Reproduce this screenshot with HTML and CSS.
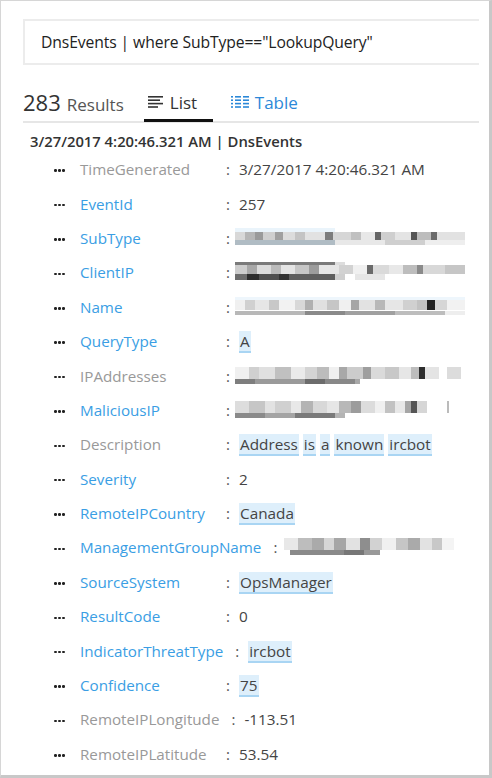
FILE: index.html
```html
<!DOCTYPE html>
<html>
<head>
<meta charset="utf-8">
<link rel="stylesheet" href="styles.css">
</head>
<body>
<div class="frame">
  <div class="query">DnsEvents | where SubType=="LookupQuery"</div>
  <div class="tabs">
    <div class="count"><span class="num">283</span> <span class="res">Results</span></div>
    <div class="tab active">
      <svg class="ico" width="16" height="12" viewBox="0 0 16 12"><rect x="0" y="0" width="15" height="1.6" fill="#333"/><rect x="0" y="3.4" width="12" height="1.6" fill="#333"/><rect x="0" y="6.8" width="15" height="1.6" fill="#333"/><rect x="0" y="10.2" width="10" height="1.6" fill="#333"/></svg>
      <span>List</span>
    </div>
    <div class="tab blue">
      <svg class="ico" width="18" height="12" viewBox="0 0 18 12"><g fill="#2b88d8"><rect x="0" y="0" width="2" height="1.6"/><rect x="4" y="0" width="6" height="1.6"/><rect x="12" y="0" width="6" height="1.6"/><rect x="0" y="3.4" width="2" height="1.6"/><rect x="4" y="3.4" width="6" height="1.6"/><rect x="12" y="3.4" width="6" height="1.6"/><rect x="0" y="6.8" width="2" height="1.6"/><rect x="4" y="6.8" width="6" height="1.6"/><rect x="12" y="6.8" width="6" height="1.6"/><rect x="0" y="10.2" width="2" height="1.6"/><rect x="4" y="10.2" width="6" height="1.6"/><rect x="12" y="10.2" width="6" height="1.6"/></g></svg>
      <span>Table</span>
    </div>
  </div>
  <div class="head">3/27/2017 4:20:46.321 AM | DnsEvents</div>
  <div class="rows">
    <div class="row"><span class="dots"><i></i><i></i><i></i></span><span class="lbl gray">TimeGenerated</span><span class="colon">:</span><span class="val">3/27/2017 4:20:46.321 AM</span></div>
    <div class="row"><span class="dots"><i></i><i></i><i></i></span><span class="lbl">EventId</span><span class="colon">:</span><span class="val">257</span></div>
    <div class="row"><span class="dots"><i></i><i></i><i></i></span><span class="lbl">SubType</span><span class="colon">:</span><span class="blur b1"></span></div>
    <div class="row"><span class="dots"><i></i><i></i><i></i></span><span class="lbl">ClientIP</span><span class="colon">:</span><span class="blur b2"></span></div>
    <div class="row"><span class="dots"><i></i><i></i><i></i></span><span class="lbl">Name</span><span class="colon">:</span><span class="blur b3"></span></div>
    <div class="row"><span class="dots"><i></i><i></i><i></i></span><span class="lbl">QueryType</span><span class="colon">:</span><span class="val"><span class="hl">A</span></span></div>
    <div class="row"><span class="dots"><i></i><i></i><i></i></span><span class="lbl gray">IPAddresses</span><span class="colon">:</span><span class="blur b4"></span></div>
    <div class="row"><span class="dots"><i></i><i></i><i></i></span><span class="lbl">MaliciousIP</span><span class="colon">:</span><span class="blur b5"></span></div>
    <div class="row"><span class="dots"><i></i><i></i><i></i></span><span class="lbl gray">Description</span><span class="colon">:</span><span class="val"><span class="hl">Address</span> <span class="hl">is</span> <span class="hl">a</span> <span class="hl">known</span> <span class="hl">ircbot</span></span></div>
    <div class="row"><span class="dots"><i></i><i></i><i></i></span><span class="lbl">Severity</span><span class="colon">:</span><span class="val">2</span></div>
    <div class="row"><span class="dots"><i></i><i></i><i></i></span><span class="lbl">RemoteIPCountry</span><span class="colon">:</span><span class="val"><span class="hl">Canada</span></span></div>
    <div class="row"><span class="dots"><i></i><i></i><i></i></span><span class="lbl">ManagementGroupName</span><span class="colon">:</span><span class="blur b6"></span></div>
    <div class="row"><span class="dots"><i></i><i></i><i></i></span><span class="lbl">SourceSystem</span><span class="colon">:</span><span class="val"><span class="hl">OpsManager</span></span></div>
    <div class="row"><span class="dots"><i></i><i></i><i></i></span><span class="lbl">ResultCode</span><span class="colon">:</span><span class="val">0</span></div>
    <div class="row"><span class="dots"><i></i><i></i><i></i></span><span class="lbl">IndicatorThreatType</span><span class="colon">:</span><span class="val"><span class="hl">ircbot</span></span></div>
    <div class="row"><span class="dots"><i></i><i></i><i></i></span><span class="lbl">Confidence</span><span class="colon">:</span><span class="val"><span class="hl">75</span></span></div>
    <div class="row"><span class="dots"><i></i><i></i><i></i></span><span class="lbl gray">RemoteIPLongitude</span><span class="colon">:</span><span class="val">-113.51</span></div>
    <div class="row"><span class="dots"><i></i><i></i><i></i></span><span class="lbl gray">RemoteIPLatitude</span><span class="colon">:</span><span class="val">53.54</span></div>
  </div>
</div>
</body>
</html>
```

FILE: styles.css
```css
html, body {
  margin: 0;
  padding: 0;
  background: #fff;
}
body {
  font-family: "Open Sans", "Noto Sans", sans-serif;
  color: #444;
}
.frame {
  box-sizing: border-box;
  width: 492px;
  height: 778px;
  border-top: 1px solid #d6d6d6;
  border-left: 1px solid #d6d6d6;
  border-right: 3px solid #c8c8c8;
  border-bottom: 3px solid #c8c8c8;
  padding: 18px 10px 0 22px;
  overflow: hidden;
}
.query {
  box-sizing: border-box;
  height: 46px;
  border: 2px solid #ececec;
  border-right: none;
  padding-left: 16px;
  display: flex;
  align-items: center;
  font-size: 15.7px;
  color: #222;
  letter-spacing: -0.1px;
}
.tabs {
  margin-top: 18px;
  height: 38px;
  border-bottom: 2px solid #e6e6e6;
  display: flex;
  align-items: center;
  position: relative;
}
.count {
  display: flex;
  align-items: baseline;
  margin-right: 20px;
}
.num {
  font-size: 22px;
  color: #333;
  margin-right: 6px;
}
.res {
  font-size: 17px;
  color: #555;
}
.tab {
  display: flex;
  align-items: center;
  height: 100%;
  padding: 0 12px 0 4px;
  font-size: 17px;
  color: #333;
  box-sizing: border-box;
}
.tab .ico {
  margin-right: 6px;
}
.tab.active {
  border-bottom: 3px solid #111;
  margin-bottom: -2px;
  padding-top: 1px;
  width: 69px;
}
.tab.blue {
  color: #2b88d8;
  margin-left: 14px;
}
.head {
  margin: 6px 0 0 7px;
  font-size: 14.8px;
  font-weight: 600;
  color: #333;
  height: 23px;
  line-height: 24px;
}
.rows {
  margin-left: 30px;
}
.row {
  height: 34.4px;
  display: flex;
  align-items: center;
  font-size: 15px;
  white-space: nowrap;
}
.dots {
  width: 27px;
  display: flex;
  gap: 1.5px;
  padding-left: 1px;
  padding-top: 3px;
  box-sizing: border-box;
}
.dots i {
  display: block;
  width: 2.5px;
  height: 2.5px;
  border-radius: 50%;
  background: #222;
}
.lbl {
  min-width: 134px;
  color: #3a9ee4;
  font-size: 15.2px;
}
.lbl.gray {
  color: #999;
}
.colon {
  margin-left: 12px;
  width: 13px;
  color: #555;
}
.val {
  color: #444;
  font-size: 15.3px;
}
.hl {
  background: #deeffb;
  border-bottom: 2px solid #a9d5f3;
  padding: 0 1px;
}
.blur {
  display: block;
  width: 230px;
  height: 20px;
  margin-left: -4px;
  background-repeat: no-repeat;
}
.b1 {
  background-image:
    linear-gradient(90deg, #eaf4fb 0 100px, #fff 100px),
    linear-gradient(90deg, #d8d8d8 0 10px, #b6b6b6 10px 20px, #9a9a9a 20px 28px, #cfcfcf 28px 40px, #a0a0a0 40px 48px, #dcdcdc 48px 60px, #c4c4c4 60px 70px, #e2e2e2 70px 90px, #7d7d7d 90px 98px, #d6d6d6 98px 116px, #c0c0c0 116px 126px, #e8e8e8 126px 140px, #666 140px 146px, #cfcfcf 146px 160px, #e4e4e4 160px 176px, #555 176px 182px, #bdbdbd 182px 196px, #6b6b6b 196px 202px, #e2e2e2 202px 230px),
    linear-gradient(90deg, #b0bcc4 0 100px, #e8e8e8 100px 150px, #cfcfcf 150px 190px, #eee 190px);
  background-size: 230px 4px, 230px 8px, 230px 5px;
  background-position: 0 0, 0 4px, 0 12px;
}
.b2 {
  background-image:
    linear-gradient(90deg, #7a7a7a 0 100px, #ddd 100px 110px, #fff 110px),
    linear-gradient(90deg, #cdcdcd 0 12px, #a8a8a8 12px 22px, #dcdcdc 22px 36px, #bbb 36px 46px, #e4e4e4 46px 60px, #c6c6c6 60px 74px, #9c9c9c 74px 84px, #e6e6e6 84px 104px, #d2d2d2 104px 118px, #f0f0f0 118px 132px, #6a6a6a 132px 138px, #dadada 138px 154px, #e8e8e8 154px 168px, #bdbdbd 168px 182px, #8a8a8a 182px 188px, #d8d8d8 188px 210px, #c6c6c6 210px 230px),
    linear-gradient(90deg, #6c6c6c 0 12px, #2d2d2d 12px 24px, #505050 24px 44px, #333 44px 54px, #5e5e5e 54px 100px, #cfcfcf 100px 110px, #fff 110px 120px, #e6e6e6 120px 150px, #fff 150px);
  background-size: 230px 3px, 230px 9px, 230px 6px;
  background-position: 0 0, 0 3px, 0 12px;
}
.b3 {
  background-image:
    linear-gradient(90deg, #eef6fc 0 230px),
    linear-gradient(90deg, #f0f0f0 0 10px, #d0d0d0 10px 20px, #e6e6e6 20px 34px, #c8c8c8 34px 44px, #f2f2f2 44px 60px, #d8d8d8 60px 70px, #b0b0b0 70px 78px, #e0e0e0 78px 92px, #c6c6c6 92px 104px, #f0f0f0 104px 116px, #a6a6a6 116px 124px, #e2e2e2 124px 140px, #b8b8b8 140px 150px, #e6e6e6 150px 168px, #d0d0d0 168px 182px, #c2c2c2 182px 192px, #222 192px 200px, #d6d6d6 200px 212px, #f2f2f2 212px 230px),
    linear-gradient(90deg, #b8b8b8 0 70px, #8a8a8a 70px 110px, #a0a0a0 110px 160px, #bdbdbd 160px 210px, #eee 210px);
  background-size: 230px 3px, 230px 10px, 230px 4px;
  background-position: 0 0, 0 3px, 0 14px;
}
.b4 {
  background-image:
    linear-gradient(90deg, #f0f0f0 0 14px, #d0d0d0 14px 24px, #e0e0e0 24px 40px, #c0c0c0 40px 56px, #eaeaea 56px 70px, #d4d4d4 70px 82px, #bcbcbc 82px 94px, #f0f0f0 94px 104px, #a8a8a8 104px 112px, #cccccc 112px 128px, #9e9e9e 128px 136px, #dadada 136px 150px, #c8c8c8 150px 164px, #e6e6e6 164px 176px, #bdbdbd 176px 184px, #2e2e2e 184px 190px, #e4e4e4 190px 204px, #fff 204px 212px, #dcdcdc 212px 226px, #fff 226px),
    linear-gradient(90deg, #7e7e7e 0 20px, #9a9a9a 20px 70px, #6c6c6c 70px 90px, #888 90px 120px, #a8a8a8 120px 125px, #fff 125px);
  background-size: 230px 12px, 230px 5px;
  background-position: 0 1px, 0 13px;
}
.b5 {
  background-image:
    linear-gradient(90deg, #ddd 0 14px, #c6c6c6 14px 30px, #e2e2e2 30px 40px, #d0d0d0 40px 56px, #e8e8e8 56px 66px, #b4b4b4 66px 78px, #d8d8d8 78px 92px, #e6e6e6 92px 104px, #b8b8b8 104px 116px, #9c9c9c 116px 126px, #dcdcdc 126px 140px, #f0f0f0 140px 150px, #c2c2c2 150px 160px, #e8e8e8 160px 170px, #a6a6a6 170px 176px, #555 176px 182px, #d6d6d6 182px 192px, #fff 192px 212px, #bbb 212px 214px, #fff 214px),
    linear-gradient(90deg, #8a8a8a 0 30px, #a4a4a4 30px 60px, #7a7a7a 60px 100px, #b4b4b4 100px 110px, #fff 110px);
  background-size: 230px 12px, 230px 5px;
  background-position: 0 1px, 0 13px;
}
.b6 {
  width: 170px;
  margin-left: -2px;
  background-image:
    linear-gradient(90deg, #e8e8e8 0 14px, #bdbdbd 14px 28px, #aaa 28px 40px, #d6d6d6 40px 50px, #a6a6a6 50px 62px, #e2e2e2 62px 76px, #8e8e8e 76px 86px, #d2d2d2 86px 98px, #f0f0f0 98px 112px, #c6c6c6 112px 124px, #aaaaaa 124px 136px, #e2e2e2 136px 148px, #c8c8c8 148px 158px, #f4f4f4 158px),
    linear-gradient(90deg, #fff 0 6px, #8a8a8a 6px 60px, #777 60px 80px, #999 80px 96px, #fff 96px);
  background-size: 170px 12px, 170px 5px;
  background-position: 0 1px, 0 13px;
}
```
